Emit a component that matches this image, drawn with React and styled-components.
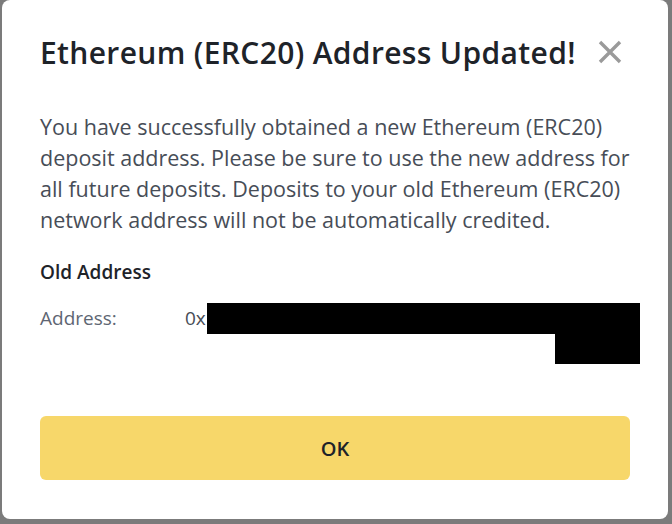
import React from "react";
import styled, { createGlobalStyle } from "styled-components";

const GlobalStyle = createGlobalStyle`
  html, body {
    margin: 0;
    padding: 0;
    background: #7b7b7b;
    font-family: "Open Sans", "Noto Sans", sans-serif;
  }
`;

const Page = styled.div`
  width: 672px;
  height: 524px;
  box-sizing: border-box;
  padding: 0 4px 5px 2px;
`;

const Card = styled.div`
  height: 100%;
  box-sizing: border-box;
  background: #fff;
  border-radius: 8px;
  padding: 32px 38px 0 38px;
  display: flex;
  flex-direction: column;
`;

const Header = styled.div`
  display: flex;
  align-items: center;
  justify-content: space-between;
  height: 40px;
`;

const Title = styled.h1`
  margin: 0;
  font-size: 30px;
  font-weight: 600;
  color: #1e2329;
  letter-spacing: 0.35px;
  white-space: nowrap;
`;

const Close = styled.button`
  border: 0;
  background: none;
  padding: 0;
  width: 28px;
  height: 28px;
  margin-right: 6px;
  cursor: pointer;
  display: flex;
  align-items: center;
  justify-content: center;
`;

const Text = styled.p`
  margin: 39px 0 0 0;
  font-size: 21.5px;
  line-height: 31px;
  color: #474d57;
`;

const Section = styled.h2`
  margin: 24px 0 0 0;
  font-size: 19px;
  font-weight: 600;
  color: #1e2329;
`;

const Row = styled.div`
  display: flex;
  margin-top: 18px;
  font-size: 19px;
  color: #5e6673;
`;

const Label = styled.span`
  flex: none;
  width: 145px;
  line-height: 31px;
`;

const Value = styled.div`
  flex: none;
  display: flex;
  flex-direction: column;
  align-items: flex-end;
  color: #474d57;
`;

const Line = styled.div`
  display: flex;
  align-items: center;
  line-height: 31px;
`;

const Redact = styled.div`
  flex: none;
  background: #000;
  margin-left: ${(p) => p.gap || 0}px;
  width: ${(p) => p.w}px;
  height: ${(p) => p.h}px;
`;

const Button = styled.button`
  margin-top: auto;
  margin-bottom: 39px;
  height: 64px;
  border: 0;
  border-radius: 6px;
  background: #f7d76a;
  color: #1e2329;
  font-family: inherit;
  font-size: 20px;
  font-weight: 600;
  cursor: pointer;
`;

export default function App() {
  return (
    <Page>
      <GlobalStyle />
      <Card>
        <Header>
          <Title>Ethereum (ERC20) Address Updated!</Title>
          <Close aria-label="close">
            <svg width="24" height="24" viewBox="0 0 24 24">
              <path d="M2 2L22 22M22 2L2 22" stroke="#9a9a9a" strokeWidth="3.4" strokeLinecap="butt" />
            </svg>
          </Close>
        </Header>
        <Text>
          You have successfully obtained a new Ethereum (ERC20) deposit address. Please be sure to use the new
          address for all future deposits. Deposits to your old Ethereum (ERC20) network address will not be
          automatically credited.
        </Text>
        <Section>Old Address</Section>
        <Row>
          <Label>Address:</Label>
          <Value>
            <Line>
              0x
              <Redact gap={1} w={433} h={31} />
            </Line>
            <Redact w={85} h={30} />
          </Value>
        </Row>
        <Button>OK</Button>
      </Card>
    </Page>
  );
}
